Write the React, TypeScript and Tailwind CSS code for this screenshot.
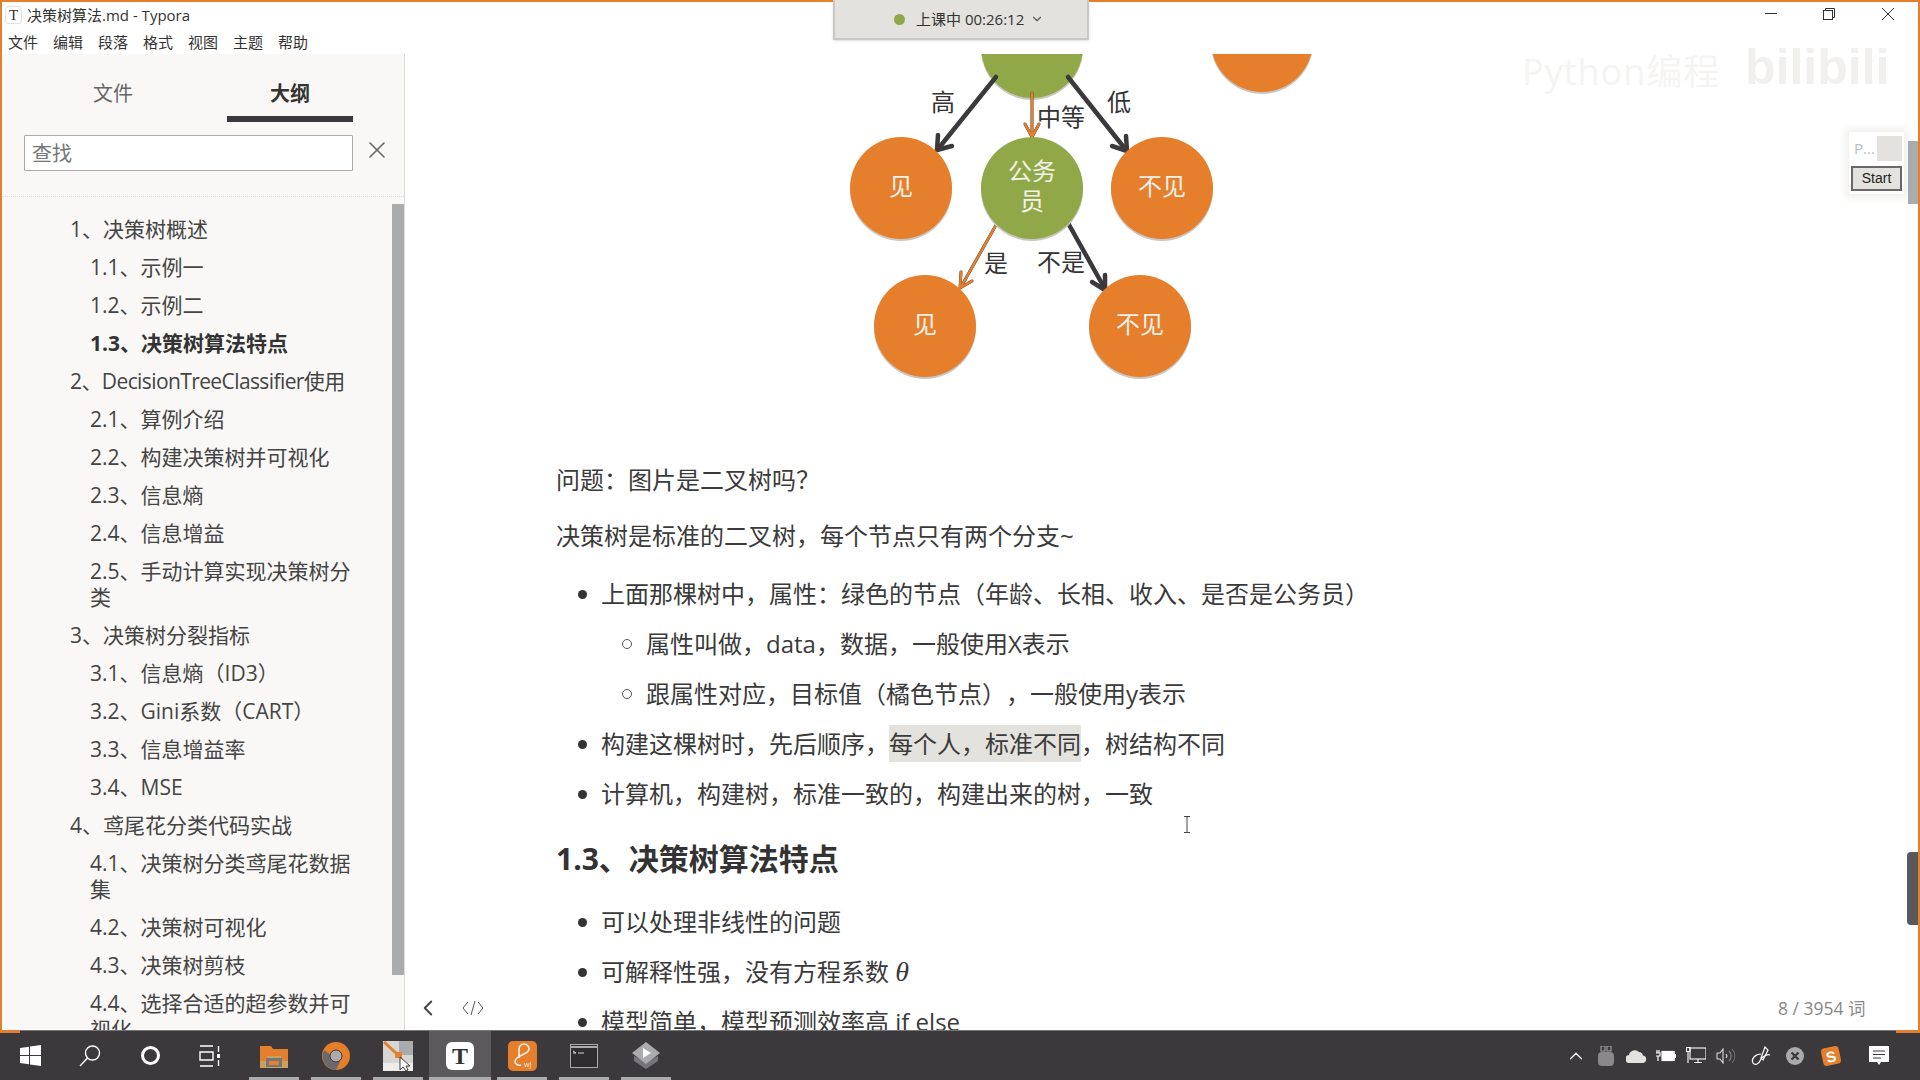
import React from 'react';
import { ChevronDown, ChevronLeft, ChevronUp, X } from 'lucide-react';

const ORANGE = '#e67f2c';
const GREEN = '#91a848';
const DARK = '#3b393c';

const outline: { text: string; level: 1 | 2; active?: boolean; tight?: boolean }[] = [
  { text: '1、决策树概述', level: 1 },
  { text: '1.1、示例一', level: 2 },
  { text: '1.2、示例二', level: 2 },
  { text: '1.3、决策树算法特点', level: 2, active: true },
  { text: '2、DecisionTreeClassifier使用', level: 1, tight: true },
  { text: '2.1、算例介绍', level: 2 },
  { text: '2.2、构建决策树并可视化', level: 2 },
  { text: '2.3、信息熵', level: 2 },
  { text: '2.4、信息增益', level: 2 },
  { text: '2.5、手动计算实现决策树分类', level: 2 },
  { text: '3、决策树分裂指标', level: 1 },
  { text: '3.1、信息熵（ID3）', level: 2 },
  { text: '3.2、Gini系数（CART）', level: 2 },
  { text: '3.3、信息增益率', level: 2 },
  { text: '3.4、MSE', level: 2 },
  { text: '4、鸢尾花分类代码实战', level: 1 },
  { text: '4.1、决策树分类鸢尾花数据集', level: 2 },
  { text: '4.2、决策树可视化', level: 2 },
  { text: '4.3、决策树剪枝', level: 2 },
  { text: '4.4、选择合适的超参数并可视化', level: 2 },
];

const menus = ['文件', '编辑', '段落', '格式', '视图', '主题', '帮助'];

const Node = ({ x, y, color, lines }: { x: number; y: number; color: string; lines: string[] }) => (
  <g>
    <circle cx={x} cy={y + 2} r={51} fill="#c9c7c4" />
    <circle cx={x} cy={y} r={51} fill={color} />
    {lines.map((line, i) => (
      <text key={line} x={x} y={y + 7 + (i - (lines.length - 1) / 2) * 30} textAnchor="middle" fontSize={24} fill="#f4f1ea">
        {line}
      </text>
    ))}
  </g>
);

const Arrow = ({ d, head, orange }: { d: string; head: string; orange?: boolean }) => (
  <g fill="none" strokeLinecap="round" strokeLinejoin="round">
    <path d={d} stroke={DARK} strokeWidth={orange ? 3 : 4.5} />
    <path d={head} stroke={DARK} strokeWidth={orange ? 3 : 4.5} />
    {orange && <path d={d} stroke={ORANGE} strokeWidth={2.5} />}
    {orange && <path d={head} stroke={ORANGE} strokeWidth={2.5} />}
  </g>
);

const Label = ({ x, y, children }: { x: number; y: number; children: string }) => (
  <text x={x} y={y} textAnchor="middle" fontSize={24} fill="#333333">
    {children}
  </text>
);

const Diagram = () => (
  <svg width={1513} height={346} viewBox="405 54 1513 346" className="block shrink-0">
    <Node x={1032} y={47} color={GREEN} lines={[]} />
    <Node x={1262} y={41} color={ORANGE} lines={[]} />
    <Arrow d="M996 77 L938 149" head="M938 135 L937 150 L952 146" />
    <Arrow d="M1032 93 L1032 136" head="M1025 124 L1032 137 L1039 124" orange />
    <Arrow d="M1068 77 L1126 150" head="M1112 146 L1127 151 L1126 136" />
    <Arrow d="M996 225 L961 287" head="M961 272 L960 288 L972 281" orange />
    <Arrow d="M1068 223 L1105 289" head="M1092 282 L1105 290 L1105 275" />
    <Node x={901} y={188} color={ORANGE} lines={['见']} />
    <Node x={1032} y={188} color={GREEN} lines={['公务', '员']} />
    <Node x={1162} y={188} color={ORANGE} lines={['不见']} />
    <Node x={925} y={326} color={ORANGE} lines={['见']} />
    <Node x={1140} y={326} color={ORANGE} lines={['不见']} />
    <Label x={943} y={111}>高</Label>
    <Label x={1061} y={126}>中等</Label>
    <Label x={1119} y={111}>低</Label>
    <Label x={996} y={272}>是</Label>
    <Label x={1061} y={271}>不是</Label>
  </svg>
);

const Li = ({ children, nested }: { children: React.ReactNode; nested?: boolean }) => (
  <li className={`flex items-center h-[36px] mb-[14px] ${nested ? 'pl-[66px]' : 'pl-[22px]'}`}>
    {nested ? (
      <span className="w-[10px] h-[10px] rounded-full border border-[#555] mr-[14px] shrink-0"></span>
    ) : (
      <span className="w-[9px] h-[9px] rounded-full bg-[#333] mr-[14px] shrink-0"></span>
    )}
    <span className="whitespace-nowrap">{children}</span>
  </li>
);

const TaskCell = ({ children, open, active }: { children: React.ReactNode; open?: boolean; active?: boolean }) => (
  <div className={`relative w-[62px] h-full flex items-center justify-center ${active ? 'bg-[#5c5a5d]' : ''}`}>
    {children}
    {open && <div className={`absolute bottom-0 h-[3px] bg-[#a9abad] ${active ? 'left-0 right-0' : 'left-[6px] right-[6px]'}`}></div>}
  </div>
);

const SysCell = ({ children }: { children: React.ReactNode }) => (
  <div className="w-[60px] h-full flex items-center justify-center">{children}</div>
);

const Taskbar = () => (
  <div className="h-[50px] shrink-0 flex bg-[#3b393c] border-t border-[#77757a] text-white">
    <SysCell>
      <svg width="21" height="21" viewBox="0 0 21 21" fill="#ffffff">
        <path d="M0 3 L9 1.7 V10 H0 Z M10 1.5 L21 0 V10 H10 Z M0 11 H9 V19.3 L0 18 Z M10 11 H21 V21 L10 19.5 Z" />
      </svg>
    </SysCell>
    <SysCell>
      <svg width="22" height="22" viewBox="0 0 22 22" fill="none" stroke="#ffffff" strokeWidth="1.4">
        <circle cx="13.5" cy="8" r="7" />
        <path d="M8.5 13 L1 21" />
      </svg>
    </SysCell>
    <SysCell>
      <div className="w-[19px] h-[19px] rounded-full border-[3px] border-white"></div>
    </SysCell>
    <SysCell>
      <svg width="22" height="22" viewBox="0 0 22 22" fill="none" stroke="#ffffff" strokeWidth="1.4">
        <path d="M1 1 H14 M1 21 H14 M1 7 H14 V15 H1 Z" />
        <path d="M19.5 1 V7 M19.5 15 V21" />
        <rect x="18" y="9" width="3" height="4" fill="#ffffff" stroke="none" />
      </svg>
    </SysCell>
    <div className="flex h-full ml-[3px]">
      <TaskCell open>
        <svg width="28" height="24" viewBox="0 0 28 24">
          <path d="M0 2 H11 L13 5 H28 V24 H0 Z" fill={ORANGE} />
          <path d="M0 17 H7 V12 H21 V17 H28 V24 H0 Z" fill="#c9a15e" />
          <rect x="6" y="14" width="16" height="9" fill="#77757a" />
          <rect x="9" y="17" width="10" height="4" fill={ORANGE} />
        </svg>
      </TaskCell>
      <TaskCell open>
        <svg width="28" height="28" viewBox="0 0 28 28">
          <circle cx="14" cy="14" r="14" fill={ORANGE} />
          <path d="M2 8 A14 14 0 0 0 14 28 L18 20 Z" fill="#6b696c" />
          <circle cx="14" cy="14" r="6" fill="#a9abad" stroke="#3b393c" strokeWidth="1" />
        </svg>
      </TaskCell>
      <TaskCell open>
        <svg width="30" height="30" viewBox="0 0 30 30">
          <rect width="30" height="30" fill="#d8d6d2" />
          <path d="M16 0 H30 V14 H16 Z" fill="#a9abad" />
          <path d="M0 22 H30 V30 H0 Z" fill="#efedea" />
          <path d="M1 1 L14 13" stroke={ORANGE} strokeWidth="3" />
          <rect x="12" y="11" width="7" height="6" fill={ORANGE} />
          <path d="M17 16 L17 29 L20 26 L23 30 L25 29 L23 25 L27 25 Z" fill="#ffffff" stroke="#3b393c" strokeWidth="1" />
        </svg>
      </TaskCell>
      <TaskCell open active>
        <div className="w-[28px] h-[28px] rounded-[6px] bg-white flex items-center justify-center text-[#333] text-[24px] font-bold font-['Liberation_Serif',serif] leading-none">T</div>
      </TaskCell>
      <TaskCell open>
        <svg width="29" height="30" viewBox="0 0 29 30">
          <rect width="29" height="30" rx="5" fill={ORANGE} />
          <path d="M11 17 V8 A5 5 0 0 1 21 8 C21 13 13 13 9 17 C5 21 8 25 13 24" fill="none" stroke="#f4f1ea" strokeWidth="1.6" />
          <text x="16" y="26" fontSize="7" fill="#f4f1ea">wJ</text>
        </svg>
      </TaskCell>
      <TaskCell open>
        <svg width="28" height="24" viewBox="0 0 28 24" fill="none" stroke="#a9abad" strokeWidth="1">
          <rect x="0.5" y="0.5" width="27" height="23" fill="#2f2d30" />
          <path d="M1 3 H27" strokeWidth="2" />
          <path d="M3 7 L6 9 L3 9 M8 9 H14" stroke="#d8d6d2" />
        </svg>
      </TaskCell>
      <TaskCell open>
        <svg width="28" height="28" viewBox="0 0 28 28">
          <path d="M14 20 L26 14 L26 19 L14 27 L2 19 L2 14 Z" fill="#77757a" />
          <path d="M14 0 L28 11 L14 22 L0 11 Z" fill="#a9abad" />
          <path d="M11 6 L19 11 L11 16 Z" fill="#ffffff" />
        </svg>
      </TaskCell>
    </div>
    <div className="ml-auto flex items-center h-full pr-[15px]">
      <div className="w-[30px] flex justify-center">
        <ChevronUp size={22} strokeWidth={1.3} />
      </div>
      <div className="w-[30px] flex justify-center">
        <svg width="16" height="20" viewBox="0 0 16 20">
          <rect x="3" y="0" width="4" height="5" fill="none" stroke="#a9abad" />
          <rect x="9" y="0" width="4" height="5" fill="none" stroke="#a9abad" />
          <rect x="0" y="6" width="16" height="14" rx="4" fill="#8a888b" />
        </svg>
      </div>
      <div className="w-[30px] flex justify-center">
        <svg width="21" height="14" viewBox="0 0 21 14" fill="#e4e2de">
          <path d="M4 14 A4 4 0 0 1 3 6 A6 6 0 0 1 13 3 A4.5 4.5 0 0 1 17 6.5 A3.8 3.8 0 0 1 17 14 Z" />
        </svg>
      </div>
      <div className="w-[30px] flex justify-center">
        <svg width="20" height="13" viewBox="0 0 20 13" fill="none" stroke="#ffffff" strokeWidth="1.2">
          <rect x="6" y="2.5" width="12" height="9" fill="#ffffff" />
          <path d="M6 2.5 H18 V11.5 H6 M19.5 5 V9 M0 4 H4 V7 H0 M1 4 V1 M3 4 V1 M2 7 V12" />
        </svg>
      </div>
      <div className="w-[30px] flex justify-center">
        <svg width="20" height="17" viewBox="0 0 20 17" fill="none" stroke="#ffffff" strokeWidth="1.1">
          <rect x="4" y="1" width="16" height="11" />
          <rect x="0.5" y="0.5" width="3.5" height="4" />
          <path d="M2 5 V16 M12 12 V15 M8 15.5 H16" />
        </svg>
      </div>
      <div className="w-[30px] flex justify-center">
        <svg width="20" height="16" viewBox="0 0 20 16" fill="none" stroke="#d8d6d2" strokeWidth="1.1">
          <path d="M1 5 H4 L7 1 V15 L4 11 H1 Z" />
          <path d="M10 6 A3 3 0 0 1 10 10" />
          <path d="M13 3 A7 7 0 0 1 13 13" stroke="#8a888b" />
          <path d="M16 1 A10 10 0 0 1 16 15" stroke="#6b696c" />
        </svg>
      </div>
      <div className="w-[40px] flex justify-center">
        <svg width="20" height="20" viewBox="0 0 20 20" fill="none" stroke="#ffffff" strokeWidth="1.2">
          <path d="M14 1 L10 12 L12 14 L17 4 Z" />
          <path d="M10 8 C4 8 0 13 2 17 C4 20 8 18 10 13 C12 10 17 8 19 9" />
        </svg>
      </div>
      <div className="w-[28px] flex justify-center">
        <svg width="18" height="18" viewBox="0 0 18 18">
          <circle cx="9" cy="9" r="9" fill="#a9abad" />
          <path d="M5.5 5.5 L12.5 12.5 M12.5 5.5 L5.5 12.5" stroke="#3b393c" strokeWidth="2.4" />
        </svg>
      </div>
      <div className="w-[44px] flex justify-center">
        <div className="w-[18px] h-[18px] rounded-[4px] bg-[#e67f2c] -rotate-12 flex items-center justify-center text-white text-[15px] font-bold leading-none font-['Liberation_Sans',sans-serif]">S</div>
      </div>
      <div className="w-[52px] flex justify-center">
        <svg width="20" height="20" viewBox="0 0 20 20">
          <path d="M0 0 H20 V16 H12 L10 19 L8 16 H0 Z" fill="#ffffff" />
          <path d="M4 5 H16 M4 8.5 H16 M4 12 H12" stroke="#3b393c" strokeWidth="1" />
        </svg>
      </div>
    </div>
  </div>
);

export default function App() {
  return (
    <div className="relative w-[1920px] h-[1080px] flex flex-col overflow-hidden bg-white text-[#333] [text-spacing-trim:space-all] font-['Open_Sans','Noto_Sans_CJK_SC',sans-serif]">
      <div className="flex-1 min-h-0 flex flex-col border-2 border-b-0 border-[#e67f2c]">
        {/* title bar */}
        <div className="h-[26px] shrink-0 flex items-center relative">
          <div className="ml-[3px] w-[17px] h-[18px] flex items-center justify-center rounded-[3px] border border-[#e4e2de] text-[15px] text-[#333] font-['Liberation_Serif',serif]">T</div>
          <span className="ml-[5px] text-[15px] leading-none text-[#333]">决策树算法.md - Typora</span>
          <div className="absolute top-[6px] left-[1763px] flex items-start">
            <svg width="12" height="12" viewBox="0 0 12 12" className="mr-[46px]">
              <path d="M0 5.5 H12" stroke="#333" strokeWidth="1" />
            </svg>
            <svg width="12" height="12" viewBox="0 0 12 12" fill="none" stroke="#333" strokeWidth="1" className="mr-[47px]">
              <rect x="0.5" y="2.5" width="9" height="9" />
              <path d="M2.5 2.5 V0.5 H11.5 V9.5 H9.5" />
            </svg>
            <svg width="12" height="12" viewBox="0 0 12 12" fill="none" stroke="#333" strokeWidth="1">
              <path d="M0 0 L12 12 M12 0 L0 12" />
            </svg>
          </div>
        </div>
        {/* menu bar */}
        <div className="h-[26px] pt-[3px] shrink-0 flex items-center gap-[15px] pl-[6px] text-[15px] leading-none text-[#333]">
          {menus.map((m) => (
            <span key={m}>{m}</span>
          ))}
        </div>

        <div className="flex-1 min-h-0 flex">
          {/* sidebar */}
          <div className="relative w-[403px] shrink-0 flex flex-col bg-[#f9f8f6] border-r border-[#dedcd8] overflow-hidden">
            <div className="flex pt-[18px] pl-[48px] gap-[51px] shrink-0">
              <div className="w-[126px] h-[50px] flex items-center justify-center text-[20px] text-[#666] border-b-[6px] border-transparent">文件</div>
              <div className="w-[126px] h-[50px] flex items-center justify-center text-[20px] font-bold text-[#333] border-b-[6px] border-[#3b393c]">大纲</div>
            </div>
            <div className="flex items-center mt-[13px] pl-[22px] shrink-0">
              <div className="w-[329px] h-[36px] flex items-center pl-[7px] pt-[2px] bg-white border border-[#aaaaaa] rounded-[1px] text-[20px] text-[#777]">查找</div>
              <X size={28} strokeWidth={1.4} className="ml-[10px] -mt-[6px] text-[#666]" />
            </div>
            <div className="flex-1 min-h-0 mt-[25px] pt-[19px] pr-[52px] border-t border-dotted border-[#dedcd8] overflow-hidden">
              {outline.map((item) => (
                <div
                  key={item.text}
                  className={`text-[21px] leading-[26px] mb-[12px] ${item.level === 1 ? 'pl-[68px]' : 'pl-[88px]'} ${item.active ? 'font-bold text-[#333]' : 'text-[#444]'} ${item.tight ? 'whitespace-nowrap tracking-[-0.6px]' : ''}`}
                >
                  {item.text}
                </div>
              ))}
            </div>
            <div className="absolute top-[150px] right-0 w-[12px] h-[771px] bg-[#a9abad]"></div>
          </div>

          {/* editor */}
          <div className="relative flex-1 min-w-0 overflow-hidden">
            <Diagram />
            <div className="pl-[151px] pt-[62px] text-[24px] leading-[36px] text-[#3a3a3a]">
              <p className="mb-[20px]">问题：图片是二叉树吗？</p>
              <p className="mb-[22px]">决策树是标准的二叉树，每个节点只有两个分支~</p>
              <ul>
                <Li>上面那棵树中，属性：绿色的节点（年龄、长相、收入、是否是公务员）</Li>
                <Li nested>属性叫做，data，数据，一般使用X表示</Li>
                <Li nested>跟属性对应，目标值（橘色节点），一般使用y表示</Li>
                <Li>
                  构建这棵树时，先后顺序，<span className="bg-[#e4e2de] py-[2px]">每个人，标准不同</span>，树结构不同
                </Li>
                <Li>计算机，构建树，标准一致的，构建出来的树，一致</Li>
              </ul>
              <h2 className="text-[30px] leading-[40px] font-bold text-[#333] mt-[27px] mb-[25px]">1.3、决策树算法特点</h2>
              <ul>
                <Li>可以处理非线性的问题</Li>
                <Li>
                  可解释性强，没有方程系数 <span className="italic text-[28px] leading-none font-['Liberation_Serif',serif]">θ</span>
                </Li>
                <Li>模型简单，模型预测效率高 if else</Li>
              </ul>
            </div>

            {/* floating bits over the page */}
            <ChevronLeft size={26} strokeWidth={1.8} className="absolute left-[10px] top-[941px] text-[#444]" />
            <svg width="22" height="16" viewBox="0 0 22 16" fill="none" stroke="#555" strokeWidth="1" className="absolute left-[57px] top-[946px]">
              <path d="M6 2 L1 8 L6 14 M16 2 L21 8 L16 14 M13 1 L9 15" />
            </svg>
            <span className="absolute left-[1373px] top-[942px] text-[17.5px] leading-[24px] text-[#888]">8 / 3954 词</span>
            <svg width="8" height="17" viewBox="0 0 8 17" fill="none" stroke="#444" strokeWidth="1" className="absolute left-[778px] top-[762px]">
              <path d="M1 0.5 H7 M1 16.5 H7 M4 0.5 V16.5" />
            </svg>
          </div>
        </div>
      </div>

      <Taskbar />

      {/* window corners that stick out over the taskbar */}
      <div className="absolute left-0 top-[1030px] w-[20px] h-[3px] bg-[#e67f2c]"></div>
      <div className="absolute right-0 top-[1030px] w-[24px] h-[3px] bg-[#e67f2c]"></div>

      {/* overlays from other windows */}
      <div className="absolute left-[833px] top-0 w-[256px] h-[40px] flex items-center bg-[#e4e2de] border-2 border-t-0 border-[#c9c7c4] text-[15px] text-[#333] shadow-sm">
        <span className="ml-[59px] w-[11px] h-[11px] rounded-full bg-[#91a848]"></span>
        <span className="ml-[11px] leading-none whitespace-nowrap">上课中 00:26:12</span>
        <ChevronDown size={14} strokeWidth={2} className="ml-[6px] text-[#555]" />
      </div>

      <div className="absolute left-[1522px] top-[52px] text-[36px] leading-[40px] tracking-[1px] text-[#f5f4f2] whitespace-nowrap">Python编程</div>
      <div className="absolute left-[1745px] top-[32px] text-[50px] leading-[70px] font-bold text-[#f1f0ee] whitespace-nowrap font-['Liberation_Sans',sans-serif]">bilibili</div>

      <div className="absolute left-[1849px] top-[132px] w-[55px] h-[62px] p-[2px] pt-[4px] bg-white shadow-[0_0_8px_4px_#f0efed]">
        <div className="flex items-start justify-between">
          <span className="text-[15px] leading-[24px] ml-[3px] text-[#bbbbbb]">P...</span>
          <span className="w-[25px] h-[25px] bg-[#e4e2de]"></span>
        </div>
        <div className="mt-[5px] h-[25px] flex items-center justify-center bg-[#e4e2de] border-2 border-[#6b686c] text-[14px] text-[#222] font-['Liberation_Sans',sans-serif]">Start</div>
      </div>

      <div className="absolute left-[1908px] top-[141px] w-[10px] h-[63px] bg-[#a9abad]"></div>
      <div className="absolute left-[1907px] top-[852px] w-[11px] h-[73px] rounded-l-[4px] bg-[#5a585b]"></div>
    </div>
  );
}
